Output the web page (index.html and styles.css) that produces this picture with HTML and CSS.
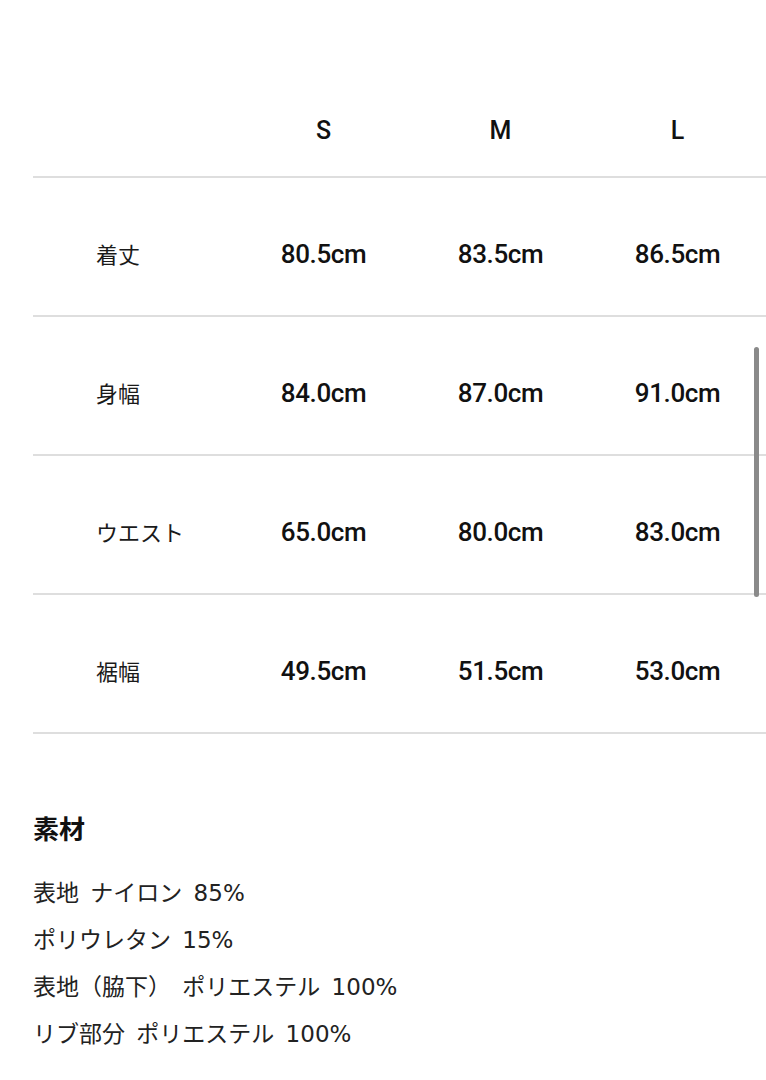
FILE: index.html
```html
<!DOCTYPE html>
<html lang="ja">
<head>
<meta charset="utf-8">
<link rel="stylesheet" href="styles.css">
</head>
<body>
<div class="page">
  <div class="table-wrap">
    <table class="size-table">
      <thead>
        <tr>
          <th class="label-col"></th>
          <th>S</th>
          <th>M</th>
          <th>L</th>
        </tr>
      </thead>
      <tbody>
        <tr><td class="label">着丈</td><td>80.5cm</td><td>83.5cm</td><td>86.5cm</td></tr>
        <tr><td class="label">身幅</td><td>84.0cm</td><td>87.0cm</td><td>91.0cm</td></tr>
        <tr><td class="label">ウエスト</td><td>65.0cm</td><td>80.0cm</td><td>83.0cm</td></tr>
        <tr><td class="label">裾幅</td><td>49.5cm</td><td>51.5cm</td><td>53.0cm</td></tr>
      </tbody>
    </table>
    <div class="scroll-thumb"></div>
  </div>
  <section class="material">
    <h2 class="material-title">素材</h2>
    <p>表地 ナイロン 85%</p>
    <p>ポリウレタン 15%</p>
    <p>表地（脇下） ポリエステル 100%</p>
    <p>リブ部分 ポリエステル 100%</p>
  </section>
</div>
</body>
</html>
```
FILE: styles.css
```css
html, body {
  margin: 0;
  padding: 0;
  background: #fff;
}
.page {
  padding: 84px 0 0 33px;
  color: #111;
}
.table-wrap {
  position: relative;
}
.size-table {
  width: 733px;
  border-collapse: collapse;
  table-layout: fixed;
  font-family: Roboto, "Noto Sans CJK JP", sans-serif;
}
.size-table th {
  font-weight: 500;
  font-size: 25px;
  line-height: 26px;
  padding: 34px 0 32px;
  text-align: center;
  border-bottom: 2px solid #dedede;
}
.size-table .label-col {
  width: 202px;
}
.size-table td {
  font-size: 26px;
  font-weight: 500;
  line-height: 26px;
  padding: 63px 0 48px;
  text-align: center;
  border-bottom: 2px solid #dedede;
  letter-spacing: -0.4px;
}
.size-table td.label {
  text-align: left;
  padding: 62px 0 49px 63px;
  font-family: "Noto Sans CJK JP", sans-serif;
  font-weight: 400;
  font-size: 22px;
  letter-spacing: 0;
  color: #1a1a1a;
}
.scroll-thumb {
  position: absolute;
  left: 721px;
  top: 263px;
  width: 5px;
  height: 250px;
  border-radius: 3px;
  background: #8a8a8a;
}
.material {
  padding-top: 76px;
  font-family: "DejaVu Sans", "Noto Sans CJK JP", sans-serif;
}
.material-title {
  margin: 0 0 24px;
  font-family: "Noto Sans CJK JP", sans-serif;
  font-size: 26px;
  line-height: 36px;
  font-weight: 700;
}
.material p {
  margin: 0;
  font-size: 23px;
  line-height: 47px;
  word-spacing: 4px;
  color: #222;
}
```
